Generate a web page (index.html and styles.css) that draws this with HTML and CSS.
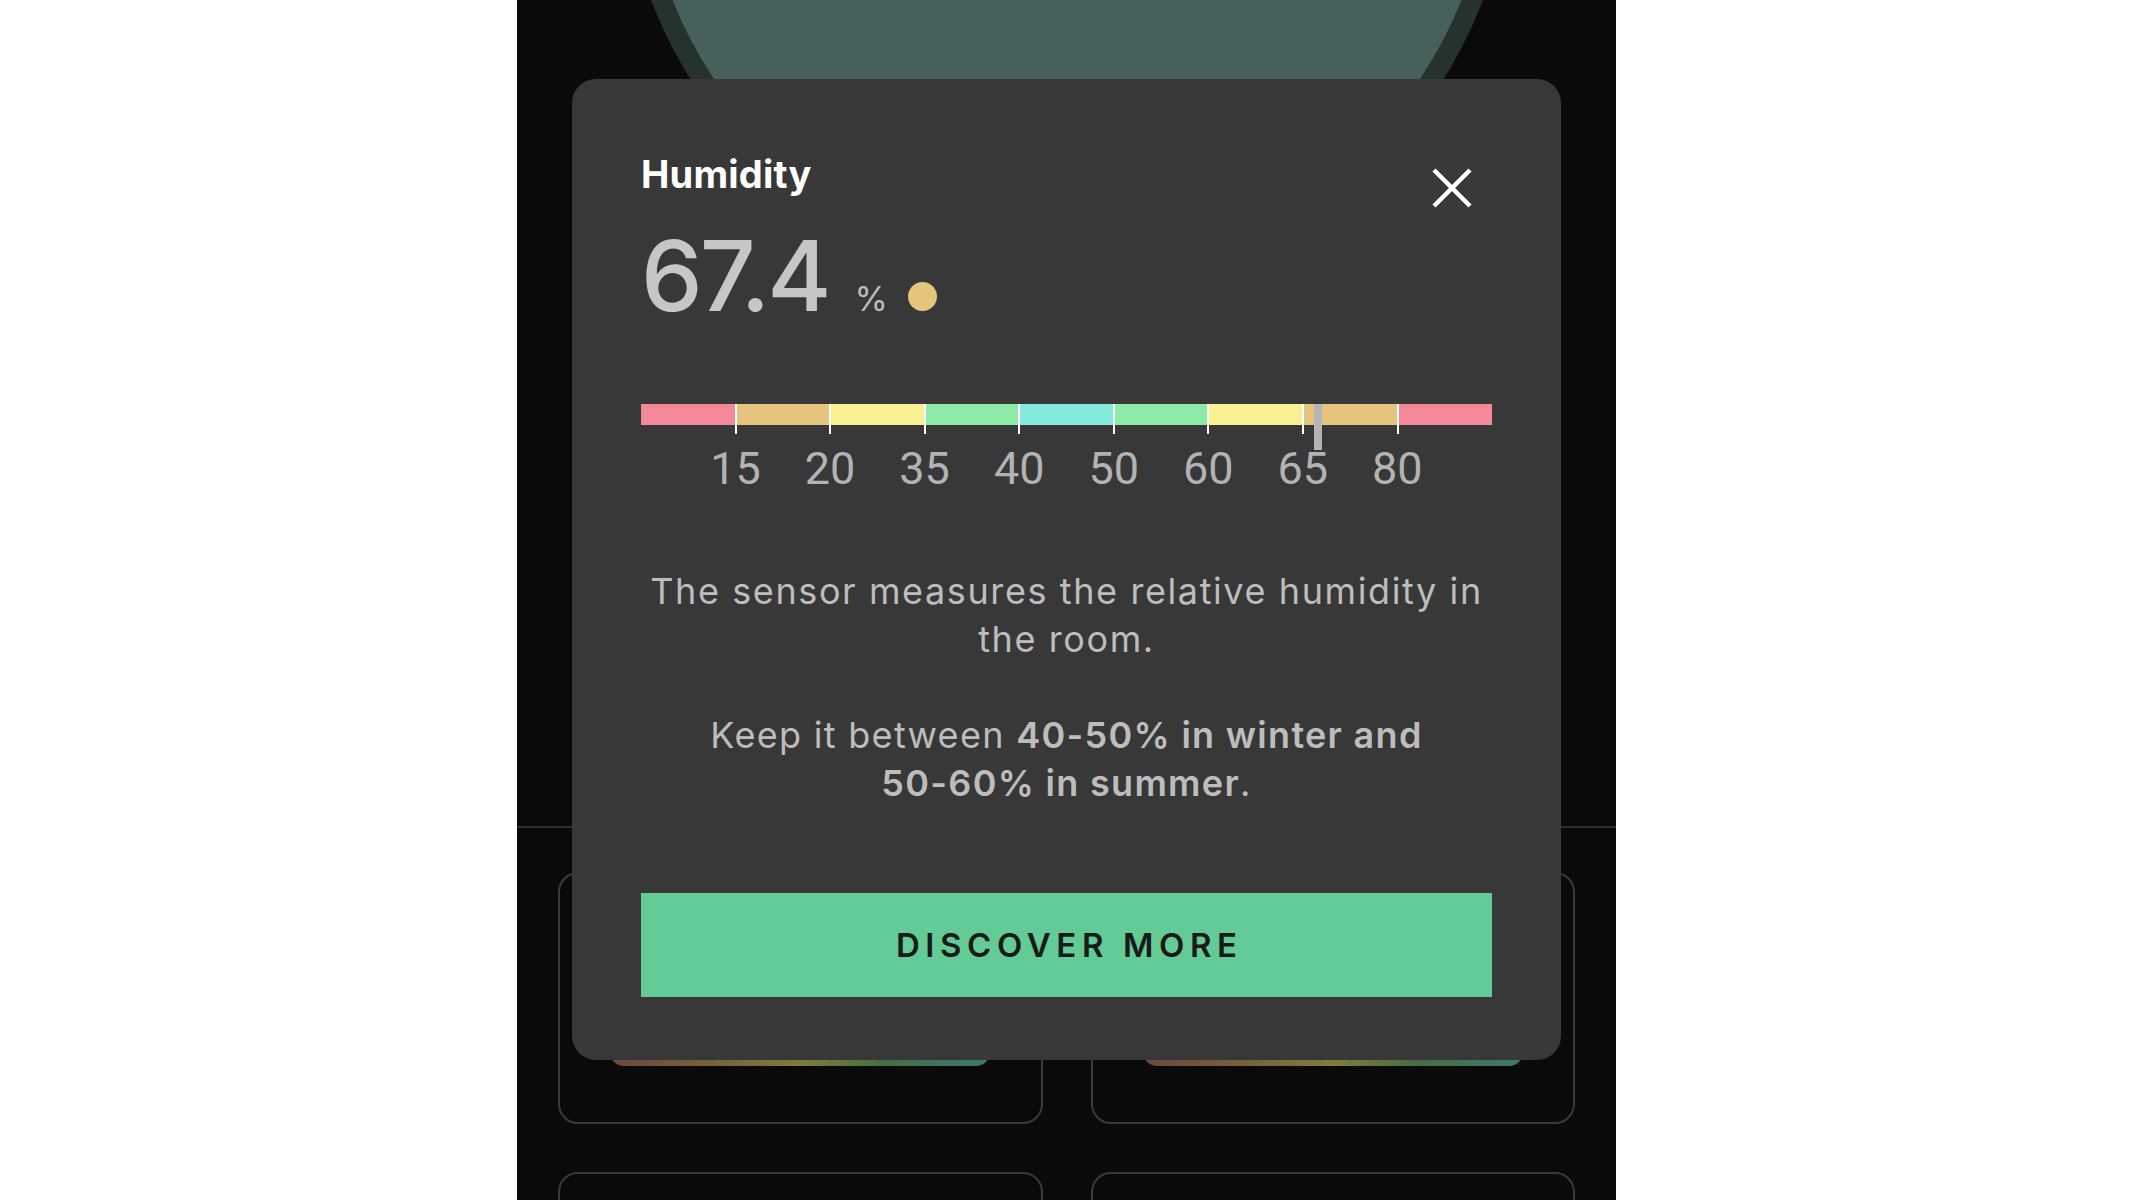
FILE: index.html
```html
<!DOCTYPE html>
<html lang="en">
<head>
<meta charset="utf-8">
<title>Humidity</title>
<link rel="stylesheet" href="styles.css">
</head>
<body>
<div class="phone">
  <section class="hero">
    <div class="dial"></div>
  </section>
  <section class="tiles">
    <div class="tile"><div class="gauge"></div></div>
    <div class="tile"><div class="gauge"></div></div>
    <div class="tile"></div>
    <div class="tile"></div>
  </section>

  <div class="modal">
    <div class="modal-head">
      <h2 class="modal-title">Humidity</h2>
      <svg class="close" viewBox="0 0 40 40" width="40" height="40" aria-label="Close">
        <path d="M2 2 L38 38 M38 2 L2 38" stroke="#ffffff" stroke-width="4.5" stroke-linecap="butt" fill="none"/>
      </svg>
    </div>
    <div class="reading">
      <span class="reading-value">67.4</span>
      <span class="reading-unit">%</span>
      <span class="reading-dot"></span>
    </div>

    <div class="scale">
      <div class="scale-bar">
        <span class="seg seg-pink"></span>
        <span class="seg seg-tan"></span>
        <span class="seg seg-yellow"></span>
        <span class="seg seg-green"></span>
        <span class="seg seg-cyan"></span>
        <span class="seg seg-green"></span>
        <span class="seg seg-yellow"></span>
        <span class="seg seg-tan"></span>
        <span class="seg seg-pink"></span>
        <span class="marker" style="left: 79.55%"></span>
      </div>
      <div class="scale-labels">
        <span>15</span><span>20</span><span>35</span><span>40</span><span>50</span><span>60</span><span>65</span><span>80</span>
      </div>
    </div>

    <p class="desc">The sensor measures the relative humidity in<br>the room.</p>
    <p class="desc desc-tip">Keep it between <b>40-50% in winter and</b><br><b>50-60% in summer</b>.</p>

    <button class="cta">DISCOVER MORE</button>
  </div>
</div>
</body>
</html>
```

FILE: styles.css
```css
* { box-sizing: border-box; }

html, body {
  margin: 0;
  padding: 0;
  height: 100%;
}

body {
  background: #ffffff;
  display: flex;
  justify-content: center;
  font-family: "Inter", "Noto Sans", sans-serif;
}

.phone {
  position: relative;
  width: 1099px;
  height: 1200px;
  background: #0a0a0a;
  overflow: hidden;
}

/* background page */
.hero {
  height: 828px;
  border-bottom: 2px solid #2d2d2d;
  overflow: hidden;
  display: flex;
  justify-content: center;
}

.dial {
  flex: 0 0 890px;
  width: 890px;
  height: 890px;
  margin-top: -603px;
  border-radius: 50%;
  background: #48605c;
  border: 20px solid #26322e;
}

.tiles {
  display: grid;
  grid-template-columns: 1fr 1fr;
  column-gap: 48px;
  row-gap: 48px;
  padding: 44px 41px 0;
}

.tile {
  height: 252px;
  border: 2px solid #3a3a3a;
  border-radius: 20px;
}

.gauge {
  width: 380px;
  height: 60px;
  margin: 132px auto 0;
  border-radius: 0 0 14px 14px;
  background: linear-gradient(90deg, #6d463e 0%, #74603c 25%, #7e7c3c 50%, #476c44 72%, #3c7a6c 100%);
}

/* modal */
.modal {
  position: absolute;
  top: 79px;
  left: 55px;
  right: 55px;
  background: #383838;
  border-radius: 24px;
  padding: 72px 69px 63px;
  display: flex;
  flex-direction: column;
}

.modal-head {
  display: flex;
  justify-content: space-between;
  align-items: flex-start;
}

.modal-title {
  margin: 0;
  font-size: 38px;
  line-height: 46px;
  font-weight: 700;
  color: #ffffff;
  letter-spacing: 0.2px;
}

.close {
  display: block;
  margin-top: 17px;
  margin-right: 20px;
}

.reading {
  display: flex;
  align-items: baseline;
  margin-top: 18px;
  color: #c6c6c6;
}

.reading-value {
  font-size: 98px;
  line-height: 100px;
  font-weight: 500;
  letter-spacing: -3px;
}

.reading-unit {
  font-size: 34px;
  line-height: 1;
  margin-left: 26px;
  color: #bcbcbc;
}

.reading-dot {
  display: inline-block;
  width: 29px;
  height: 29px;
  border-radius: 50%;
  background: #e6c47c;
  margin-left: 20px;
}

.scale {
  margin-top: 78px;
}

.scale-bar {
  position: relative;
  display: flex;
  height: 21px;
}

.seg {
  position: relative;
  flex: 1 1 0;
}

.seg + .seg::before {
  content: "";
  position: absolute;
  left: -1px;
  top: 0;
  width: 2px;
  height: 30px;
  background: #ffffff;
}

.seg-pink { background: #f48a99; }
.seg-tan { background: #e6c47e; }
.seg-yellow { background: #f8f191; }
.seg-green { background: #8eeaa7; }
.seg-cyan { background: #84eadc; }

.marker {
  position: absolute;
  top: 0;
  width: 8px;
  height: 46px;
  margin-left: -4px;
  background: #b4b4b4;
}

.scale-labels {
  display: flex;
  margin-top: 18px;
  margin-left: 47.28px;
  font-family: "Roboto", "Inter", sans-serif;
  font-size: 45px;
  line-height: 52px;
  color: #b3b3b3;
}

.scale-labels span {
  flex: 0 0 94.56px;
  text-align: center;
}

.desc {
  margin: 72px -4px 0;
  text-align: center;
  font-size: 36px;
  line-height: 48px;
  color: #bdbdbd;
  letter-spacing: 1.6px;
}

.desc b {
  font-weight: 600;
}

.desc-tip {
  margin-top: 48px;
  letter-spacing: 1.3px;
}

.cta {
  margin-top: 86px;
  height: 104px;
  border: 0;
  border-radius: 0;
  background: #63cc96;
  color: #1a1a1a;
  font-family: "Inter", "Noto Sans", sans-serif;
  font-size: 33px;
  font-weight: 600;
  letter-spacing: 5.6px;
  padding: 0 0 0 5.6px;
  cursor: pointer;
}
```
